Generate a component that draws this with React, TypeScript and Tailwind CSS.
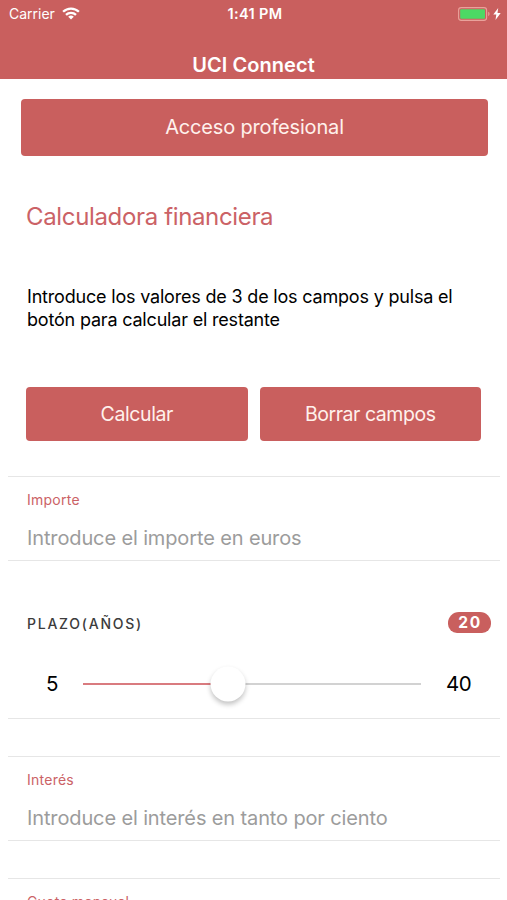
import React, { useState } from 'react';

interface FieldProps {
  label: string;
  placeholder: string;
}

interface ActionButtonProps {
  label: string;
  className: string;
  onClick?: () => void;
}

const MIN_YEARS = 5;
const MAX_YEARS = 40;

const StatusBar: React.FC = () => (
  <div className="grid h-[27px] grid-cols-3 items-center pl-[9px] pr-[6px] text-white">
    <div className="flex items-center gap-[7px]">
      <span className="text-[14px]">Carrier</span>
      <svg width="18" height="13" viewBox="0 0 18 13" fill="none" stroke="currentColor" strokeWidth="2.3">
        <path d="M1.1 4.8a11.2 11.2 0 0 1 15.8 0" />
        <path d="M4 7.9a7.1 7.1 0 0 1 10 0" />
        <path d="M9 12.6 6.2 9.8a4 4 0 0 1 5.6 0Z" fill="currentColor" stroke="none" />
      </svg>
    </div>
    <span className="text-center text-[14.5px] font-semibold tracking-[0.35px]">1:41 PM</span>
    <div className="flex items-center justify-end gap-[3px]">
      <svg width="33" height="14" viewBox="0 0 33 14">
        <rect x="1.6" y="0.6" width="28" height="12.8" rx="2.6" fill="none" stroke="#e9a29b" strokeWidth="1.1" />
        <rect x="3.2" y="2.2" width="24.8" height="9.6" rx="1" fill="#4cd964" />
        <path d="M31.2 4.8v4.4q1.4-.6 1.4-2.2t-1.4-2.2Z" fill="#e9a29b" />
      </svg>
      <svg width="8" height="12" viewBox="0 0 8 12" fill="currentColor">
        <path d="M5.2 0 .3 6.6h3L2.5 12l5.2-6.9H4.5Z" />
      </svg>
    </div>
  </div>
);

const ActionButton: React.FC<ActionButtonProps> = ({ label, className, onClick }) => (
  <button onClick={onClick} className={`rounded-[4px] bg-[#c95f5e] text-[#fff1ec] ${className}`}>
    {label}
  </button>
);

const Field: React.FC<FieldProps> = ({ label, placeholder }) => (
  <label className="mr-[7px] ml-2 block h-[85px] border-y border-[#e6e6e6] pl-[19px] pt-[13px]">
    <span className="block text-[14px] leading-[20px] tracking-[0.25px] text-[#cb6266]">{label}</span>
    <input
      placeholder={placeholder}
      className="mt-[13px] block h-[30px] w-full bg-transparent text-[20px] leading-[30px] tracking-[-0.13px] outline-none placeholder:text-[#9c9c9c]"
    />
  </label>
);

const YearsSlider: React.FC = () => {
  const [years] = useState(20);
  const percent = ((years - MIN_YEARS) / (MAX_YEARS - MIN_YEARS)) * 100;

  return (
    <div className="mr-[7px] ml-2 h-[158px] border-b border-[#e6e6e6] pt-[51px]">
      <div className="flex h-[21px] items-center justify-between pl-[19px] pr-[9px]">
        <span className="pt-[2px] text-[14px] font-medium tracking-[1.75px] text-[#3c3c3c]">PLAZO(AÑOS)</span>
        <span className="flex h-[21px] w-[43px] items-center justify-center rounded-t-[11px] rounded-b-[9px] bg-[#c95f5e] pt-[1px] pl-[1px] text-[15.5px] font-bold tracking-[1.6px] text-white">
          {years}
        </span>
      </div>
      <div className="mt-[35px] flex h-[32px] items-center text-[20.5px] text-black">
        <span className="w-[75px] pl-[38px]">{MIN_YEARS}</span>
        <div className="relative h-[2px] w-[338px] bg-[#d2d2d2]">
          <div className="h-full bg-[#d97b7f]" style={{ width: `${percent}%` }} />
          <div
            className="absolute top-1/2 size-[35px] -translate-x-1/2 -translate-y-1/2 rounded-full bg-white shadow-[0_3px_5px_rgba(0,0,0,0.24)]"
            style={{ left: `${percent}%` }}
          />
        </div>
        <span className="pl-[25px] tracking-[-0.5px]">{MAX_YEARS}</span>
      </div>
    </div>
  );
};

const App: React.FC = () => {
  return (
    <div className="h-[900px] w-[507px] overflow-hidden bg-white font-['Inter',sans-serif]">
      <header className="h-[79px] bg-[#c95f5e]">
        <StatusBar />
        <h1 className="pt-[23px] text-center text-[20px] leading-[30px] font-semibold tracking-[0.05px] text-white">
          UCI Connect
        </h1>
      </header>

      <main>
        <div className="pt-5 pr-[19px] pl-[21px]">
          <ActionButton label="Acceso profesional" className="h-[57px] w-full pb-[2px] text-[20px] tracking-[-0.17px]" />
        </div>

        <h2 className="mt-[45px] pl-[26px] text-[24px] leading-[32px] tracking-[-0.35px] text-[#cb6266]">
          Calculadora financiera
        </h2>

        <p className="mt-[52px] pl-[27px] text-[18px] leading-[23px] tracking-[-0.19px] text-black">
          Introduce los valores de 3 de los campos y pulsa el
          <br />
          botón para calcular el restante
        </p>

        <div className="mt-[56px] flex gap-3 px-[26px]">
          <ActionButton label="Calcular" className="h-[54px] flex-1 pt-[2px] text-[19.5px] tracking-[-0.4px]" />
          <ActionButton label="Borrar campos" className="h-[54px] flex-1 pt-[2px] text-[19.5px] tracking-[-0.45px]" />
        </div>

        <div className="mt-[35px]">
          <Field label="Importe" placeholder="Introduce el importe en euros" />
        </div>
        <YearsSlider />
        <div className="mt-[37px]">
          <Field label="Interés" placeholder="Introduce el interés en tanto por ciento" />
        </div>
        <div className="mt-[37px]">
          <Field label="Cuota mensual" placeholder="Introduce la cuota mensual" />
        </div>
      </main>
    </div>
  );
};

export default App;
